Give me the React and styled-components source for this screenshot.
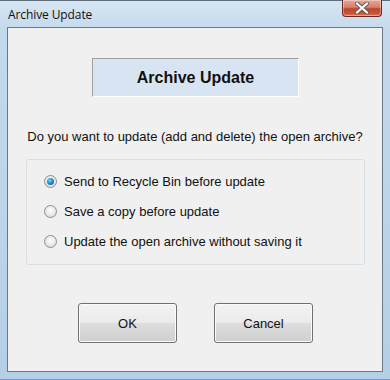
import styled, { createGlobalStyle } from 'styled-components'
import { useState } from 'react'

const Global = createGlobalStyle`
    html, body {
        margin: 0;
        padding: 0;
        background: #bcd3e6;
    }
`

const Window = styled.div`
    width: 390px;
    height: 380px;
    box-sizing: border-box;
    display: flex;
    flex-direction: column;
    background: linear-gradient(180deg, #d7e6f3 0%, #c3d9ec 8%, #bcd4e9 60%, #b4cfe6 100%);
    border-top: 1px solid #5f6f80;
    border-bottom: 1px solid #35b4ea;
    font-family: "Liberation Sans", Arial, sans-serif;
`

const TitleBar = styled.div`
    height: 26px;
    display: flex;
    justify-content: space-between;
    align-items: flex-start;
    padding-left: 8px;
    padding-right: 8px;
`

const Title = styled.div`
    font-family: "Open Sans", "DejaVu Sans", sans-serif;
    font-size: 12px;
    color: #101010;
    margin-top: 5px;
    letter-spacing: -0.1px;
`

const CloseButton = styled.div`
    width: 40px;
    height: 17px;
    margin-top: -1px;
    box-sizing: border-box;
    border: 1px solid #6a2a22;
    border-top: none;
    border-radius: 0 0 4px 4px;
    background: linear-gradient(180deg, #e4a797 0%, #d7806b 45%, #c0442c 55%, #c8563c 85%, #e07e5e 100%);
    box-shadow: inset 0 0 0 1px rgba(255, 255, 255, 0.35);
    display: flex;
    align-items: center;
    justify-content: center;
`

const Client = styled.div`
    flex: 1;
    margin: 0 7px 7px 7px;
    border: 1px solid #6c7885;
    background: #f0f0f0;
    display: flex;
    flex-direction: column;
    align-items: center;
`

const Header = styled.div`
    margin-top: 30px;
    margin-left: 1px;
    width: 207px;
    height: 39px;
    box-sizing: border-box;
    background: #d9e4f2;
    border-top: 1px solid #a0a0a0;
    border-left: 1px solid #a0a0a0;
    border-right: 1px solid #ffffff;
    border-bottom: 1px solid #ffffff;
    display: flex;
    align-items: center;
    justify-content: center;
    font-size: 16px;
    font-weight: bold;
    color: #111;
`

const Question = styled.div`
    margin-top: 32px;
    font-size: 13px;
    color: #111;
`

const Group = styled.div`
    margin-top: 15px;
    width: 339px;
    height: 106px;
    box-sizing: border-box;
    border: 1px solid #d5dfe5;
    border-radius: 3px;
    padding: 12px 0 0 17px;
    display: flex;
    flex-direction: column;
    gap: 12px;
    margin-left: 1px;
`

const Option = styled.label`
    display: flex;
    align-items: center;
    height: 18px;
    font-size: 13px;
    color: #111;
    cursor: default;
`

const Radio = styled.span`
    width: 13px;
    height: 13px;
    box-sizing: border-box;
    border-radius: 50%;
    border: 1px solid #8e8f8f;
    background: radial-gradient(circle at 50% 40%, #ffffff 0%, #e8e8e8 55%, #d0d0d0 100%);
    margin-right: 7px;
    display: flex;
    align-items: center;
    justify-content: center;

    &::after {
        content: '';
        display: ${p => (p.$checked ? 'block' : 'none')};
        width: 7px;
        height: 7px;
        border-radius: 50%;
        background: radial-gradient(circle at 40% 35%, #7fd2f7 0%, #1f8fcd 45%, #0c4f86 100%);
    }
`

const ButtonRow = styled.div`
    margin-top: 38px;
    display: flex;
    gap: 37px;
    margin-left: 1px;
`

const Button = styled.button`
    width: 99px;
    height: 40px;
    box-sizing: border-box;
    border: 1px solid #707070;
    border-radius: 3px;
    background: linear-gradient(180deg, #f3f3f3 0%, #ebebeb 48%, #dddddd 52%, #cfcfcf 100%);
    box-shadow: inset 0 0 0 1px #fbfbfb;
    font-family: "Liberation Sans", Arial, sans-serif;
    font-size: 13px;
    color: #111;
    padding: 0;
`

const options = [
    'Send to Recycle Bin before update',
    'Save a copy before update',
    'Update the open archive without saving it',
]

function App() {
    const [choice, setChoice] = useState(0)

    return (
        <>
            <Global />
            <Window>
                <TitleBar>
                    <Title>Archive Update</Title>
                    <CloseButton>
                        <svg width="14" height="12" viewBox="0 0 14 12">
                            <path d="M2 1.5 L12 10.5 M12 1.5 L2 10.5" stroke="#5a5a5a" strokeWidth="4" strokeLinecap="round" />
                            <path d="M2 1.5 L12 10.5 M12 1.5 L2 10.5" stroke="#ffffff" strokeWidth="2.2" strokeLinecap="round" />
                        </svg>
                    </CloseButton>
                </TitleBar>
                <Client>
                    <Header>Archive Update</Header>
                    <Question>Do you want to update (add and delete) the open archive?</Question>
                    <Group>
                        {options.map((text, i) => (
                            <Option key={i} onClick={() => setChoice(i)}>
                                <Radio $checked={choice === i} />
                                {text}
                            </Option>
                        ))}
                    </Group>
                    <ButtonRow>
                        <Button>OK</Button>
                        <Button>Cancel</Button>
                    </ButtonRow>
                </Client>
            </Window>
        </>
    )
}

export default App
